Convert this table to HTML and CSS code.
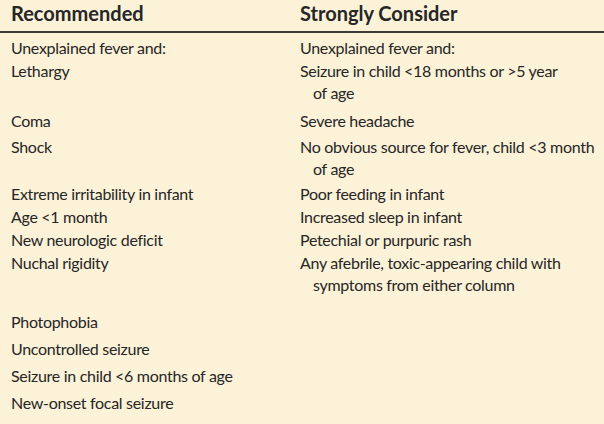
FILE: index.html
```html
<!DOCTYPE html>
<html lang="en">
<head>
<meta charset="utf-8">
<title>Indications for lumbar puncture</title>
<link rel="stylesheet" href="styles.css">
</head>
<body>
<div class="table">
  <div class="row head">
    <div class="cell">Recommended</div>
    <div class="cell">Strongly Consider</div>
  </div>
  <div class="row p4">
    <div class="cell">Unexplained fever and:</div>
    <div class="cell">Unexplained fever and:</div>
  </div>
  <div class="row p1">
    <div class="cell">Lethargy</div>
    <div class="cell hang">Seizure in child &lt;18 months or &gt;5 year<br>of age</div>
  </div>
  <div class="row p6">
    <div class="cell">Coma</div>
    <div class="cell">Severe headache</div>
  </div>
  <div class="row p4">
    <div class="cell">Shock</div>
    <div class="cell hang">No obvious source for fever, child &lt;3 month<br>of age</div>
  </div>
  <div class="row p3">
    <div class="cell">Extreme irritability in infant</div>
    <div class="cell">Poor feeding in infant</div>
  </div>
  <div class="row p1">
    <div class="cell">Age &lt;1 month</div>
    <div class="cell">Increased sleep in infant</div>
  </div>
  <div class="row p1">
    <div class="cell">New neurologic deficit</div>
    <div class="cell">Petechial or purpuric rash</div>
  </div>
  <div class="row p1">
    <div class="cell">Nuchal rigidity</div>
    <div class="cell hang">Any afebrile, toxic-appearing child with<br>symptoms from either column</div>
  </div>
  <div class="row p15">
    <div class="cell">Photophobia</div>
    <div class="cell"></div>
  </div>
  <div class="row p5">
    <div class="cell">Uncontrolled seizure</div>
    <div class="cell"></div>
  </div>
  <div class="row p5">
    <div class="cell">Seizure in child &lt;6 months of age</div>
    <div class="cell"></div>
  </div>
  <div class="row p5">
    <div class="cell">New-onset focal seizure</div>
    <div class="cell"></div>
  </div>
</div>
</body>
</html>
```

FILE: styles.css
```css
html, body {
  margin: 0;
  padding: 0;
  background: #fcf2d8;
}

body {
  width: 604px;
  height: 424px;
  overflow: hidden;
  font-family: Lato, "Liberation Sans", sans-serif;
  font-size: 16px;
  line-height: 22px;
  letter-spacing: -0.3px;
  color: #262626;
}

.table {
  display: flex;
  flex-direction: column;
}

.row {
  display: grid;
  grid-template-columns: 289px 1fr;
  padding-left: 11px;
}

.cell {
  white-space: nowrap;
}

.head {
  font-weight: bold;
  font-size: 20px;
  letter-spacing: 0;
  padding-top: 2px;
  padding-bottom: 7px;
  border-bottom: 2px solid #3c3a36;
}

.hang {
  padding-left: 13px;
  text-indent: -13px;
}

.p1 { padding-top: 1px; }
.p3 { padding-top: 3px; }
.p4 { padding-top: 4px; }
.p5 { padding-top: 5px; }
.p6 { padding-top: 6px; }
.p15 { padding-top: 15px; }
```
